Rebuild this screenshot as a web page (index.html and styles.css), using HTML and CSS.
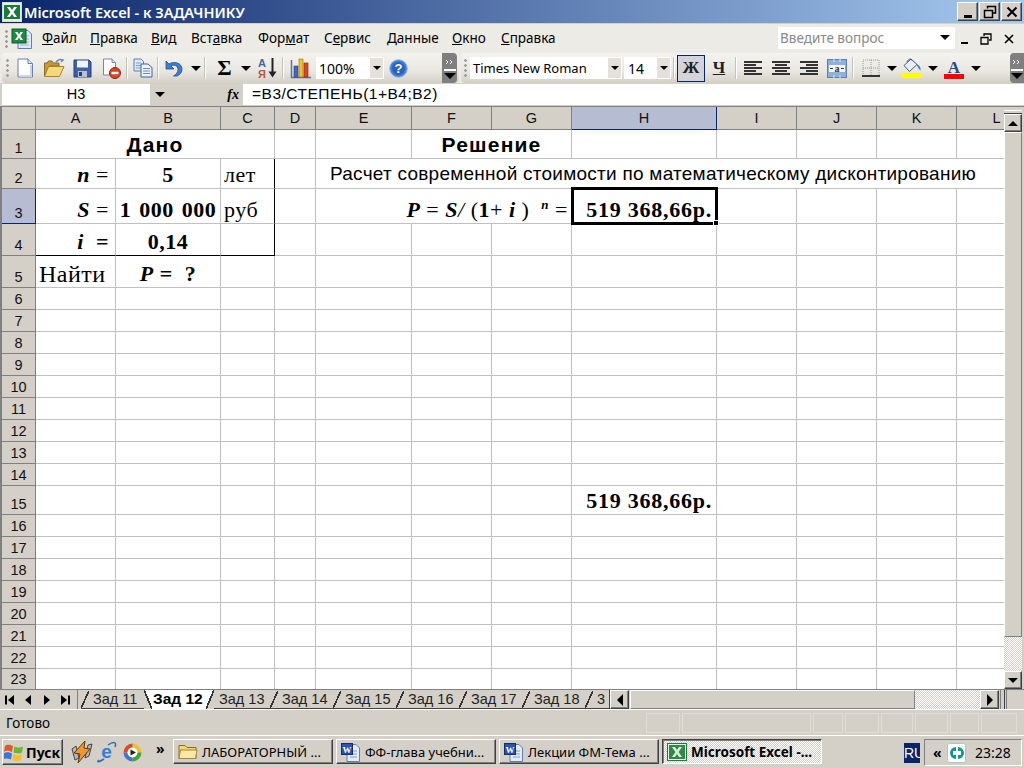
FILE: index.html
```html
<!DOCTYPE html>
<html lang="ru">
<head>
<meta charset="utf-8">
<title>Microsoft Excel</title>
<link rel="stylesheet" href="styles.css">
</head>
<body>
<div class="window">
  <header class="titlebar">
    <svg class="app-icon" width="20" height="20" viewBox="0 0 20 20"><rect x="0.5" y="0.5" width="19" height="19" fill="#e8f0e0" stroke="#cfe0c8"/><rect x="2" y="3" width="16" height="14" fill="#1c7a3c"/><path d="M5 5l3 0 2 3 2-3 3 0-3.500 5 3.500 5-3 0-2-3-2 3-3 0 3.500-5z" fill="#fff"/></svg>
    <span class="title-text">Microsoft Excel - к ЗАДАЧНИКУ</span>
    <div class="winbtns">
      <span class="winbtn"><i class="g-min"></i></span>
      <span class="winbtn"><svg width="14" height="14" viewBox="0 0 14 14"><path d="M4.500 3.500V1.500H12.500V8H10M1.500 5.500H9.500V12.500H1.500Z" fill="none" stroke="#000" stroke-width="1.500"/></svg></span>
      <span class="winbtn"><svg width="12" height="12" viewBox="0 0 12 12"><path d="M1.500 1.500L10.500 10.500M10.500 1.500L1.500 10.500" stroke="#000" stroke-width="2"/></svg></span>
    </div>
  </header>

  <nav class="menubar">
    <span class="grip"></span>
    <svg class="doc-icon" width="22" height="22" viewBox="0 0 22 22"><path d="M7 2.500H17L20.500 6V20.500H7Z" fill="#dfe8f6" stroke="#5f7fb5"/><path d="M9 8h9M9 11h9M9 14h9M9 17h9" stroke="#9db4d8"/><rect x="1" y="1" width="14" height="14" fill="#1e8a44" stroke="#0c5a26"/><path d="M4 4h2.500l1.500 2.500L9.500 4H12L9.300 8 12 12H9.500L8 9.500 6.500 12H4l2.700-4z" fill="#fff"/></svg>
    <div class="menus">
      <span class="m1"><u>Ф</u>айл</span>
      <span class="m2"><u>П</u>равка</span>
      <span class="m3"><u>В</u>ид</span>
      <span class="m4">Вст<u>а</u>вка</span>
      <span class="m5">Фор<u>м</u>ат</span>
      <span class="m6">С<u>е</u>рвис</span>
      <span class="m7"><u>Д</u>анные</span>
      <span class="m8"><u>О</u>кно</span>
      <span class="m9"><u>С</u>правка</span>
    </div>
    <div class="helpbox"><span>Введите вопрос</span><i class="arr"></i></div>
    <div class="doc-btns">
      <i class="g-min g-min-sm"></i>
      <svg width="12" height="12" viewBox="0 0 12 12"><path d="M4 3V1H11V7H9M1 4.500H8V11H1Z" fill="none" stroke="#000" stroke-width="1.300"/></svg>
      <svg width="10" height="10" viewBox="0 0 10 10"><path d="M1 1L9 9M9 1L1 9" stroke="#000" stroke-width="1.600"/></svg>
    </div>
  </nav>

  <div class="toolrow">
    <div class="toolbar tb-std">
      <span class="grip grip-tb"></span>
      <span class="tbtn"><svg width="18" height="20" viewBox="0 0 18 20"><path d="M2 1H12L16.500 5.500V19H2Z" fill="#fff" stroke="#6d7f9c"/><path d="M12 1V5.500H16.500" fill="#d9e4f4" stroke="#6d7f9c"/><path d="M15 7V18H4" fill="none" stroke="#c8d6ec" stroke-width="2"/></svg></span>
      <span class="tbtn"><svg width="22" height="20" viewBox="0 0 22 20"><path d="M1.500 18V5H4L5.500 3H9L10 5H16V8H6L1.500 18Z" fill="#c59a3c" stroke="#8a6a2a"/><path d="M1.500 18.500L5.500 8.500H21L16.500 18.500Z" fill="#f6d87a" stroke="#a8842f"/><path d="M13 4C15 1.500 17 1 20 2L18 4" fill="none" stroke="#6c87b5" stroke-width="1.500"/></svg></span>
      <span class="tbtn"><svg width="19" height="19" viewBox="0 0 19 19"><path d="M1 1H16L18 3V18H1Z" fill="#3f5fa8" stroke="#25407f"/><rect x="4" y="1.500" width="11" height="7" fill="#f0f3fa"/><rect x="5" y="12" width="9" height="6" fill="#b9c2d4"/><rect x="6" y="13" width="3" height="4" fill="#25407f"/></svg></span>
      <span class="tbtn"><svg width="19" height="21" viewBox="0 0 19 21"><path d="M1.500 1H10L13.500 4.500V17H1.500Z" fill="#fff" stroke="#7b8798"/><path d="M10 1V4.500H13.500" fill="#d9e4f4" stroke="#7b8798"/><circle cx="13" cy="15" r="5.500" fill="#d8452b" stroke="#8e2415"/><rect x="9.500" y="13.800" width="7" height="2.400" fill="#fff"/></svg></span>
      <i class="tsep"></i>
      <span class="tbtn"><svg width="20" height="20" viewBox="0 0 20 20"><path d="M1 1H8L10.500 3.500V13H1Z" fill="#dfe8f6" stroke="#5f7fb5"/><path d="M3 5h5M3 7.500h5M3 10h5" stroke="#7e9ccc"/><path d="M8 6H15L19 9.500V19H8Z" fill="#eef3fb" stroke="#3f61a5"/><path d="M10 10.500h7M10 13h7M10 15.500h7" stroke="#6d8ec8"/></svg></span>
      <i class="tsep"></i>
      <span class="tbtn"><svg width="19" height="19" viewBox="0 0 19 19"><path d="M2 2V10H10L7 7C10 5 14 7 14 10.500C14 13.500 12 15.500 9.500 17H13C16.500 15.500 18 13 18 10C18 4.500 11 1.500 5 5Z" fill="#3e7ecf" stroke="#21508f" stroke-width="0.800"/></svg></span>
      <span class="tarr"><i class="arr"></i></span>
      <i class="tsep tsep-a"></i>
      <span class="tbtn tbtn-s sigma">Σ</span>
      <span class="tarr tarr-s"><i class="arr"></i></span>
      <span class="tbtn"><svg width="20" height="22" viewBox="0 0 20 22"><text x="0" y="10" class="ic-az ic-a">А</text><text x="0" y="21" class="ic-az ic-r">Я</text><path d="M14.500 1V17" stroke="#222" stroke-width="2"/><path d="M10.500 14.500H18.500L14.500 20.500Z" fill="#222"/></svg></span>
      <i class="tsep"></i>
      <span class="tbtn tbtn-c"><svg width="22" height="22" viewBox="0 0 22 22"><path d="M1.500 3V20.500H21" fill="none" stroke="#62708a" stroke-width="1.500"/><rect x="4" y="9" width="4" height="11" fill="#3f66c8" stroke="#26407f" stroke-width="0.600"/><rect x="9" y="2" width="4" height="18" fill="#f0c030" stroke="#8e7018" stroke-width="0.600"/><rect x="14" y="6" width="4" height="14" fill="#d8452b" stroke="#8e2415" stroke-width="0.600"/></svg></span>
      <div class="combo combo-zoom"><span>100%</span><b><i class="arr arr-s"></i></b></div>
      <span class="tbtn"><svg width="19" height="19" viewBox="0 0 19 19"><circle cx="9.500" cy="9.500" r="8.800" fill="#3f7fd8" stroke="#8fb5ea"/><circle cx="9.500" cy="9.500" r="6.500" fill="#2a62c0"/><text x="9.500" y="14" class="ic-help">?</text></svg></span>
      <span class="flex1"></span>
      <span class="chevron"><svg width="14" height="26" viewBox="0 0 14 26"><path d="M3 5l2 2-2 2M7 5l2 2-2 2" fill="none" stroke="#fff"/><path d="M1 15H13" stroke="#fff" stroke-width="2"/><path d="M1 18H13L7 24Z" fill="#000"/></svg></span>
    </div>
    <div class="toolbar tb-fmt">
      <span class="grip grip-tb2"></span>
      <div class="combo combo-font"><span>Times New Roman</span><b><i class="arr arr-s"></i></b></div>
      <div class="combo combo-size"><span>14</span><b><i class="arr arr-s"></i></b></div>
      <i class="tsep tsep-f"></i>
      <span class="tbtn tbtn-on glyph">Ж</span>
      <span class="tbtn glyph glyph-u">Ч</span>
      <i class="tsep tsep-g"></i>
      <span class="tbtn"><i class="lines l-left"><i></i><i></i><i></i><i></i><i></i></i></span>
      <span class="tbtn"><i class="lines l-center"><i></i><i></i><i></i><i></i><i></i></i></span>
      <span class="tbtn"><i class="lines l-right"><i></i><i></i><i></i><i></i><i></i></i></span>
      <span class="tbtn"><svg width="20" height="19" viewBox="0 0 20 19"><rect x="0.500" y="0.500" width="19" height="18" fill="#8fb0d8" stroke="#5d7fb0"/><rect x="2" y="6" width="16" height="7" fill="#f2f5fa"/><path d="M3 9.500h3M17 9.500h-3" stroke="#333"/><path d="M7 3V0M13 3V0M7 16V19M13 16V19" stroke="#dfe8f6"/><text x="10" y="12.500" class="ic-merge">а</text></svg></span>
      <i class="tsep tsep-h"></i>
      <span class="tbtn tbtn-b"><svg width="18" height="18" viewBox="0 0 18 18"><path d="M1 1H17V17H1ZM9 1V17M1 9H17" fill="none" stroke="#9a9a9a" stroke-dasharray="1 1"/><path d="M0 17H18" stroke="#333" stroke-width="2"/></svg></span>
      <span class="tarr tarr-b"><i class="arr"></i></span>
      <span class="tbtn"><svg width="20" height="20" viewBox="0 0 20 20"><path d="M9 1L2 7.500L7.500 13.500L15 6.500Z" fill="#e8eef8" stroke="#405a88"/><path d="M5 4C6 1 9 0 10 2.500" fill="none" stroke="#405a88"/><path d="M15 6C18 8 19 10 18.500 12.500C17 11.500 16 9 15 8Z" fill="#3e7ecf"/><rect y="15" width="20" height="5" fill="#ffff00"/></svg></span>
      <span class="tarr tarr-f"><i class="arr"></i></span>
      <span class="tbtn"><svg width="20" height="21" viewBox="0 0 20 21"><text x="10" y="14.500" class="ic-a2">A</text><rect y="16" width="20" height="5" fill="#ff0000"/></svg></span>
      <span class="tarr tarr-l"><i class="arr"></i></span>
      <span class="flex1"></span>
      <span class="chevron chevron-end"><svg width="14" height="26" viewBox="0 0 14 26"><path d="M3 5l2 2-2 2M7 5l2 2-2 2" fill="none" stroke="#fff"/><path d="M1 15H13" stroke="#fff" stroke-width="2"/><path d="M1 18H13L7 24Z" fill="#000"/></svg></span>
    </div>
  </div>

  <div class="formulabar">
    <div class="namebox">H3</div>
    <span class="name-arrow"><i class="arr"></i></span>
    <span class="fx">fx</span>
    <div class="formula">=В3/СТЕПЕНЬ(1+В4;В2)</div>
  </div>

  <main class="sheet">
    <div class="gridwrap">
      <table class="grid">
        <colgroup><col class="c-h"><col class="c-a"><col class="c-b"><col class="c-c"><col class="c-d"><col class="c-e"><col class="c-x"><col class="c-x"><col class="c-hh"><col class="c-x"><col class="c-x"><col class="c-x"><col class="c-x"></colgroup>
        <thead>
          <tr class="head"><th></th><th>A</th><th>B</th><th>C</th><th>D</th><th>E</th><th>F</th><th>G</th><th class="sel">H</th><th>I</th><th>J</th><th>K</th><th>L</th></tr>
        </thead>
        <tbody>
          <tr class="r1"><th>1</th><td colspan="3" class="hd">Дано</td><td></td><td></td><td colspan="2" class="hd hd2">Решение</td><td></td><td></td><td></td><td></td><td></td></tr>
          <tr class="r2"><th>2</th><td class="ser right"><em>n</em> <span class="reg">=</span></td><td class="ser ctr">5</td><td class="ser lft reg bR">лет</td><td></td><td colspan="8" class="sans-txt">Расчет современной стоимости по математическому дисконтированию</td></tr>
          <tr class="r3"><th class="sel">3</th><td class="ser right"><em>S</em> <span class="reg">=</span></td><td class="ser ctr nowrap wide">1 000 000</td><td class="ser lft reg bR">руб</td><td></td><td colspan="3" class="ser eq"><em>P</em> <span class="reg">=</span> <em>S</em><span class="reg it">/</span> <span class="reg">(</span>1<span class="reg">+</span> <em>i</em> <span class="reg">)</span> &nbsp;<sup class="pow">n</sup> <span class="reg">=</span></td><td class="ser res active">519 368,66р.<span class="cursor"><i class="handle"></i></span></td><td></td><td></td><td></td><td></td></tr>
          <tr class="r4"><th>4</th><td class="ser right bB"><em>i</em> &nbsp;=</td><td class="ser ctr bB">0,14</td><td class="bB bR"></td><td></td><td></td><td></td><td></td><td></td><td></td><td></td><td></td><td></td></tr>
          <tr class="r5"><th>5</th><td class="ser lft reg big nowrap">Найти</td><td class="ser ctr"><em>P</em> = &nbsp;?</td><td></td><td></td><td></td><td></td><td></td><td></td><td></td><td></td><td></td><td></td></tr>
          <tr><th>6</th><td></td><td></td><td></td><td></td><td></td><td></td><td></td><td></td><td></td><td></td><td></td><td></td></tr>
          <tr><th>7</th><td></td><td></td><td></td><td></td><td></td><td></td><td></td><td></td><td></td><td></td><td></td><td></td></tr>
          <tr><th>8</th><td></td><td></td><td></td><td></td><td></td><td></td><td></td><td></td><td></td><td></td><td></td><td></td></tr>
          <tr><th>9</th><td></td><td></td><td></td><td></td><td></td><td></td><td></td><td></td><td></td><td></td><td></td><td></td></tr>
          <tr><th>10</th><td></td><td></td><td></td><td></td><td></td><td></td><td></td><td></td><td></td><td></td><td></td><td></td></tr>
          <tr><th>11</th><td></td><td></td><td></td><td></td><td></td><td></td><td></td><td></td><td></td><td></td><td></td><td></td></tr>
          <tr><th>12</th><td></td><td></td><td></td><td></td><td></td><td></td><td></td><td></td><td></td><td></td><td></td><td></td></tr>
          <tr><th>13</th><td></td><td></td><td></td><td></td><td></td><td></td><td></td><td></td><td></td><td></td><td></td><td></td></tr>
          <tr><th>14</th><td></td><td></td><td></td><td></td><td></td><td></td><td></td><td></td><td></td><td></td><td></td><td></td></tr>
          <tr class="r15"><th>15</th><td></td><td></td><td></td><td></td><td></td><td></td><td></td><td class="ser res">519 368,66р.</td><td></td><td></td><td></td><td></td></tr>
          <tr><th>16</th><td></td><td></td><td></td><td></td><td></td><td></td><td></td><td></td><td></td><td></td><td></td><td></td></tr>
          <tr><th>17</th><td></td><td></td><td></td><td></td><td></td><td></td><td></td><td></td><td></td><td></td><td></td><td></td></tr>
          <tr><th>18</th><td></td><td></td><td></td><td></td><td></td><td></td><td></td><td></td><td></td><td></td><td></td><td></td></tr>
          <tr><th>19</th><td></td><td></td><td></td><td></td><td></td><td></td><td></td><td></td><td></td><td></td><td></td><td></td></tr>
          <tr><th>20</th><td></td><td></td><td></td><td></td><td></td><td></td><td></td><td></td><td></td><td></td><td></td><td></td></tr>
          <tr><th>21</th><td></td><td></td><td></td><td></td><td></td><td></td><td></td><td></td><td></td><td></td><td></td><td></td></tr>
          <tr><th>22</th><td></td><td></td><td></td><td></td><td></td><td></td><td></td><td></td><td></td><td></td><td></td><td></td></tr>
          <tr class="r23"><th>23</th><td></td><td></td><td></td><td></td><td></td><td></td><td></td><td></td><td></td><td></td><td></td><td></td></tr>
        </tbody>
      </table>
    </div>
    <aside class="vscroll">
      <i class="split-h"></i>
      <span class="sbtn sbtn-v"><i class="tri tri-up"></i></span>
      <span class="vthumb"></span>
      <span class="dither flex1"></span>
      <span class="sbtn sbtn-v"><i class="tri tri-down"></i></span>
    </aside>
  </main>

  <div class="tabsrow">
    <div class="tabnav">
      <svg width="12" height="12" viewBox="0 0 12 12"><path d="M2 1.500V10.500" stroke="#000" stroke-width="2"/><path d="M10 1L4 6L10 11Z"/></svg>
      <svg width="12" height="12" viewBox="0 0 12 12"><path d="M9 1L3 6L9 11Z"/></svg>
      <svg width="12" height="12" viewBox="0 0 12 12"><path d="M3 1L9 6L3 11Z"/></svg>
      <svg width="12" height="12" viewBox="0 0 12 12"><path d="M10 1.500V10.500" stroke="#000" stroke-width="2"/><path d="M2 1L8 6L2 11Z"/></svg>
    </div>
    <div class="tabs">
      <span class="tab">Зад 11</span>
      <span class="tab tab-on">Зад 12</span>
      <span class="tab">Зад 13</span>
      <span class="tab">Зад 14</span>
      <span class="tab">Зад 15</span>
      <span class="tab">Зад 16</span>
      <span class="tab">Зад 17</span>
      <span class="tab">Зад 18</span>
      <span class="tab tab-last">3</span>
    </div>
    <div class="hscroll">
      <span class="sbtn sbtn-h"><i class="tri tri-left"></i></span>
      <span class="hthumb"></span>
      <span class="dither flex1"></span>
      <span class="sbtn sbtn-h"><i class="tri tri-right"></i></span>
      <i class="split-v"></i>
      <span class="corner"></span>
    </div>
  </div>

  <div class="statusbar">
    <span class="status-text">Готово</span>
    <div class="panels"><i class="p1"></i><i class="p2"></i><i class="p3"></i><i class="p4"></i><i class="p5"></i><i class="p6"></i><i class="p7"></i><i class="p8"></i></div>
  </div>

  <footer class="taskbar">
    <div class="start">
      <svg width="20" height="20" viewBox="0 0 20 20"><path d="M1 4C4 2 6 3 9 4L8 10C5 9 3 8 0 10Z" fill="#e2572a"/><path d="M10.500 4.500C13 6 16 6 19 4.500L18 10.500C15 12 13 11.500 9.500 10.500Z" fill="#6cb52e"/><path d="M0 11.500C3 9.500 5 10.500 8 11.500L7 17.500C4 16.500 2 16 -1 17.500Z" fill="#3d74d8"/><path d="M9.500 12C12 13.500 15 13.500 18 12L17 18C14 19.500 11 19 8.500 18Z" fill="#f3c02c"/></svg>
      <span>Пуск</span>
    </div>
    <div class="quick">
      <svg class="q1" width="22" height="24" viewBox="0 0 22 24"><path d="M5 6L1 9L4 20L8 18ZM17 5L21 4L18 16L14 18Z" fill="#b8b8b8" stroke="#444"/><path d="M14 1L3 13L9 14L7 23L19 9L13 8Z" fill="#f0962a" stroke="#5a3a10"/></svg>
      <svg class="q2" width="21" height="22" viewBox="0 0 21 22"><text x="10.500" y="17" class="ic-e">e</text><path d="M3 19C0 22 3 21 8 18M12 4C18 0 21 1 19 6" fill="none" stroke="#2c6fb9" stroke-width="1.500"/></svg>
      <svg class="q3" width="19" height="19" viewBox="0 0 19 19"><path d="M9.500 .5A9 9 0 0 1 18.500 9.500H13A3.500 3.500 0 0 0 9.500 6Z" fill="#e9c22c"/><path d="M18.500 9.500A9 9 0 0 1 9.500 18.500V13A3.500 3.500 0 0 0 13 9.500Z" fill="#43a339"/><path d="M9.500 18.500A9 9 0 0 1 .5 9.500H6A3.500 3.500 0 0 0 9.500 13Z" fill="#3f77d0"/><path d="M.5 9.500A9 9 0 0 1 9.500 .5V6A3.500 3.500 0 0 0 6 9.500Z" fill="#d9492a"/><circle cx="9.500" cy="9.500" r="5" fill="#fff"/><path d="M7.500 6.500L13 9.500L7.500 12.500Z" fill="#222"/></svg>
      <span class="more">»</span>
    </div>
    <div class="tasks">
      <span class="task"><svg width="20" height="17" viewBox="0 0 20 17"><path d="M1 15.500V2.500H7L9 4.500H18V15.500Z" fill="#f3d477" stroke="#8a6a20"/><path d="M1 15.500L2.500 7H19L17.500 15.500Z" fill="#fbe9a8" stroke="#a8842f"/></svg><em>ЛАБОРАТОРНЫЙ ...</em></span>
      <span class="task"><svg width="20" height="20" viewBox="0 0 20 20"><path d="M6 2.500H15L18.500 6V19.500H6Z" fill="#e4ecf8" stroke="#5f7fb5"/><path d="M9 9h7M9 12h7M9 15h7" stroke="#7e9ccc"/><rect x="0.500" y="1.500" width="11" height="11" fill="#2a52b0" stroke="#152d6d"/><text x="6" y="10.500" class="ic-w">W</text></svg><em>ФФ-глава учебни...</em></span>
      <span class="task"><svg width="20" height="20" viewBox="0 0 20 20"><path d="M6 2.500H15L18.500 6V19.500H6Z" fill="#e4ecf8" stroke="#5f7fb5"/><path d="M9 9h7M9 12h7M9 15h7" stroke="#7e9ccc"/><rect x="0.500" y="1.500" width="11" height="11" fill="#2a52b0" stroke="#152d6d"/><text x="6" y="10.500" class="ic-w">W</text></svg><em>Лекции ФМ-Тема ...</em></span>
      <span class="task task-on"><svg width="20" height="18" viewBox="0 0 20 18"><rect x="0.500" y="0.500" width="19" height="17" fill="#e8f0e0" stroke="#1c7a3c"/><rect x="2" y="2" width="16" height="14" fill="#2c8a4a"/><path d="M5 4h3l2 3 2-3h3l-3.500 5L15 14h-3l-2-3-2 3H5l3.500-5z" fill="#dff0d8"/></svg><em>Microsoft Excel -...</em></span>
    </div>
    <div class="lang">RU</div>
    <div class="tray">
      <span class="tray-more">«</span>
      <svg width="19" height="20" viewBox="0 0 19 20"><rect x="0.500" y="0.500" width="18" height="19" rx="2" fill="#fff" stroke="#a8c8c0"/><path d="M9 4A6 6 0 1 0 9 16ZM11 4V16A6 6 0 0 0 11 4Z" fill="#0e9a8e"/><rect x="6" y="8" width="3" height="4" fill="#fff"/><rect x="11" y="8" width="3" height="4" fill="#fff"/></svg>
      <span class="clock">23:28</span>
    </div>
  </footer>
</div>
</body>
</html>
```
FILE: styles.css
```css
* { box-sizing: border-box; }
html, body { margin: 0; padding: 0; background: #d4d0c8; }
.window { width: 1024px; height: 768px; overflow: hidden; display: flex; flex-direction: column; font-family: "Noto Sans", "Liberation Sans", sans-serif; color: #000; }
.flex1 { flex: 1; }
i { display: block; font-style: normal; }

/* title */
.titlebar { height: 23px; flex: none; display: flex; align-items: center; padding: 0 2px 0 2px; background: linear-gradient(to right, #0a246a, #a6caf0); }
.app-icon { flex: none; margin-right: 2px; }
.title-text { color: #fff; font-size: 14.500px; font-weight: 600; flex: 1; white-space: nowrap; }
.winbtns { display: flex; gap: 1px; }
.winbtn { width: 21px; height: 19px; display: flex; align-items: center; justify-content: center; background: #d4d0c8; border: 1px solid; border-color: #fff #404040 #404040 #fff; box-shadow: inset -1px -1px 0 #808080; }
.g-min { width: 8px; height: 3px; background: #000; margin-top: 9px; }
.g-min-sm { height: 2px; width: 8px; margin-top: 8px; }

/* menu */
.menubar { height: 30px; flex: none; display: flex; align-items: center; background: #ecebe6; border-top: 1px solid #d4d0c8; padding-left: 5px; }
.grip { width: 3px; height: 18px; flex: none; background: radial-gradient(circle at 1.500px 1.500px, #a09c90 1.200px, transparent 1.500px) 0 0 / 3px 5px; }
.doc-icon { margin-left: 3px; flex: none; }
.menus { display: flex; font-size: 13.500px; margin: -2px 0 0 9px; width: 736px; white-space: nowrap; }
.menus span { flex: none; }
.m1 { width: 48px; } .m2 { width: 61px; } .m3 { width: 40px; } .m4 { width: 67px; } .m5 { width: 66px; } .m6 { width: 63px; } .m7 { width: 65px; } .m8 { width: 49px; }
.helpbox { width: 177px; height: 22px; background: #fff; display: flex; align-items: center; justify-content: space-between; padding: 0 5px 0 2px; font-size: 13.500px; color: #8a8a8a; flex: none; margin-top: -2px; }
.doc-btns { display: flex; align-items: center; gap: 12px; margin-left: 6px; width: 60px; }
.doc-btns .g-min-sm { width: 7px; }
.arr { width: 0; height: 0; border-left: 5px solid transparent; border-right: 5px solid transparent; border-top: 5px solid #000; }
.arr-s { border-left-width: 4px; border-right-width: 4px; border-top-width: 4px; }

/* toolbars */
.toolrow { height: 30px; flex: none; display: flex; background: #ecebe6; padding-left: 2px; }
.toolbar { height: 30px; display: flex; align-items: center; background: linear-gradient(to bottom, #f4f3ef, #e9e7e1 60%, #d3d0c6); border-radius: 4px 0 0 4px; }
.tb-std { width: 457px; padding-left: 4px; border-radius: 4px; }
.tb-fmt { width: 563px; padding-left: 3px; margin-left: 2px; }
.grip-tb { margin-right: 1px; }
.grip-tb2 { margin-right: 3px; }
.tbtn { flex: none; width: 29px; height: 28px; display: flex; align-items: center; justify-content: center; }
.tb-fmt .tbtn { width: 28px; }
.tbtn-s { margin-left: 2px; }
.tbtn-c { margin-left: 3px; margin-right: 1px; width: 28px; }
.tarr { flex: none; width: 15px; display: flex; justify-content: center; }
.tarr-s { width: 13px; margin-right: 1px; }
.tarr-b { width: 13px; }
.tarr-f { width: 14px; }
.tarr-l { width: 15px; }
.tsep { flex: none; width: 2px; height: 22px; background: linear-gradient(to right, #c5c2b8 50%, #fff 50%); }
.tsep-a { margin-left: 1px; margin-right: 2px; }
.tsep-f { margin: 0 2px; }
.tsep-g { margin: 0 2px; }
.tsep-h { margin: 0 3px 0 1px; }
.sigma { font-family: "Liberation Serif", serif; font-weight: 700; font-size: 22px; }
.combo { flex: none; height: 22px; background: #fff; display: flex; align-items: center; justify-content: space-between; font-size: 14px; padding-left: 3px; }
.combo span { white-space: nowrap; }
.combo b { width: 13px; height: 20px; background: #e3e1da; display: flex; align-items: center; justify-content: center; margin-right: 1px; }
.combo-zoom { width: 68px; }
.combo-font { width: 152px; margin-right: 2px; font-size: 13px; }
.combo-size { width: 47px; padding-left: 4px; }
.tb-fmt .tbtn-on { height: 27px; background: #d2d4da; border: 1px solid #0a246a; }
.glyph { font-family: "Liberation Serif", serif; font-weight: 700; font-size: 17px; color: #222; }
.glyph-u { text-decoration: underline; }
.lines { display: flex; flex-direction: column; gap: 1px; width: 18px; }
.lines i { height: 2px; width: 18px; background: #333; }
.lines i:nth-child(even) { width: 12px; }
.l-center { align-items: center; }
.l-right { align-items: flex-end; }
.chevron { flex: none; width: 15px; height: 30px; display: flex; align-items: center; justify-content: center; background: #7f7f7f; border-radius: 0 4px 4px 0; margin-right: 2px; }
.chevron-end { margin-right: 0; width: 14px; border-radius: 4px 0 0 4px; }
.ic-az { font-family: "Liberation Sans", sans-serif; font-weight: 700; font-size: 11px; }
.ic-a { fill: #3f66a8; }
.ic-r { fill: #b5564a; }
.ic-help { font-family: "Liberation Sans", sans-serif; font-weight: 700; font-size: 13px; fill: #fff; text-anchor: middle; }
.ic-merge { font-family: "Liberation Serif", serif; font-weight: 700; font-size: 10px; text-anchor: middle; fill: #333; }
.ic-a2 { font-family: "Liberation Serif", serif; font-weight: 700; font-size: 17px; text-anchor: middle; fill: #24478f; }
.ic-w { font-family: "Liberation Serif", serif; font-weight: 700; font-size: 9px; text-anchor: middle; fill: #fff; }
.ic-e { font-family: "Liberation Sans", sans-serif; font-weight: 700; font-size: 19px; text-anchor: middle; fill: #2f80d8; }

/* formula bar */
.formulabar { height: 23px; flex: none; display: flex; background: #d4d0c8; padding: 1px 0 1px 2px; }
.namebox { width: 148px; background: #fff; text-align: center; font: 14.500px/21px "Liberation Sans", sans-serif; }
.name-arrow { width: 20px; display: flex; align-items: center; justify-content: center; }
.fx { width: 73px; text-align: right; padding-right: 4px; font: italic 700 14px/21px "Liberation Serif", serif; }
.formula { flex: 1; background: #fff; padding-left: 9px; font: 15.500px/20px "Liberation Sans", sans-serif; letter-spacing: 0.500px; }

/* sheet */
.sheet { height: 583px; flex: none; display: flex; border-top: 1px solid #808080; }
.gridwrap { width: 1004px; flex: none; overflow: hidden; border-left: 2px solid #808080; background: #fff; }
.grid { table-layout: fixed; width: 1035px; border-collapse: separate; border-spacing: 0; }
.c-h { width: 34px; } .c-a { width: 80px; } .c-b { width: 105px; } .c-c { width: 54px; } .c-d { width: 41px; } .c-e { width: 96px; } .c-x { width: 80px; } .c-hh { width: 145px; }
.grid th { background: #d4d0c8; font: 400 14.500px/20px "Liberation Sans", sans-serif; color: #111; text-align: center; vertical-align: bottom; border-right: 1px solid #808080; border-bottom: 1px solid #808080; padding: 0; height: 22px; }
.grid td { height: 22px; padding: 0; border-right: 1px solid #c0c0c0; border-bottom: 1px solid #c0c0c0; vertical-align: bottom; overflow: hidden; position: relative; }
.head th { height: 23px; vertical-align: middle; }
.grid th.sel { background: #b6bdd2; border-right-color: #0a246a; border-bottom-color: #0a246a; }
.r1 th, .r1 td { height: 29px; }
.r2 th, .r2 td { height: 30px; }
.r3 th, .r3 td { height: 35px; }
.r4 th, .r4 td { height: 32px; }
.r5 th, .r5 td { height: 32px; }
.r15 th, .r15 td { height: 29px; }
.r23 th, .r23 td { height: 21px; border-bottom-color: transparent; }
.r23 th { border-bottom-color: #d4d0c8; }
.grid td.bB { border-bottom-color: #000; }
.grid td.bR { border-right-color: #000; }
.hd { font: 700 21px/26px "Liberation Sans", sans-serif; text-align: center; letter-spacing: 1.200px; }
.sans-txt { font: 19px/29px "Liberation Sans", sans-serif; padding-left: 14px !important; white-space: nowrap; letter-spacing: 0.250px; }
.ser { font: 700 22px/26px "Liberation Serif", serif; white-space: nowrap; letter-spacing: 0.500px; }
.ser em { font-style: italic; }
.reg { font-weight: 400; }
.it { font-style: italic; }
.wide { word-spacing: 2px; }
.right { text-align: right; padding-right: 6px !important; }
.ctr { text-align: center; }
.lft { padding-left: 3px !important; }
.big { font-size: 24px; }
.eq { text-align: right; padding-right: 3px !important; overflow: visible; }
.pow { font-size: 13px; font-style: italic; line-height: 0; vertical-align: 8px; }
.res { text-align: right; padding-right: 4px !important; letter-spacing: 0.750px; }
.grid td.active { overflow: visible; z-index: 2; }
.cursor { position: absolute; left: -1px; top: -2px; right: -2px; bottom: -2px; border: 3px solid #000; }
.handle { position: absolute; right: -4px; bottom: -4px; width: 6px; height: 6px; background: #000; border: 1px solid #fff; }

/* scrollbars */
.vscroll { width: 18px; flex: none; display: flex; flex-direction: column; }
.split-h { height: 7px; flex: none; border-bottom: 1px solid #404040; border-top: 3px solid #d4d0c8; box-shadow: inset 0 1px 0 #fff; }
.sbtn { flex: none; display: flex; align-items: center; justify-content: center; background: #d4d0c8; border: 1px solid; border-color: #fff #404040 #404040 #fff; box-shadow: inset -1px -1px 0 #808080; }
.sbtn-v { height: 18px; width: 18px; }
.vthumb { height: 505px; flex: none; background: #d4d0c8; border: 1px solid; border-color: #fff #808080 #808080 #fff; }
.dither { background: repeating-conic-gradient(#fff 0 25%, #d4d0c8 0 50%) 0 0 / 2px 2px; }
.tri { width: 0; height: 0; }
.tri-up { border-left: 5px solid transparent; border-right: 5px solid transparent; border-bottom: 5px solid #000; }
.tri-down { border-left: 5px solid transparent; border-right: 5px solid transparent; border-top: 5px solid #000; }
.tri-left { border-top: 6px solid transparent; border-bottom: 6px solid transparent; border-right: 6px solid #000; }
.tri-right { border-top: 6px solid transparent; border-bottom: 6px solid transparent; border-left: 6px solid #000; }

/* tabs */
.tabsrow { height: 20px; flex: none; display: flex; background: #d4d0c8; border-top: 1px solid #808080; }
.tabnav { width: 78px; flex: none; display: flex; align-items: center; justify-content: space-between; padding: 0 6px 0 4px; border-right: 1px solid #808080; }
.tabs { width: 530px; margin-left: 1px; flex: none; display: flex; overflow: hidden; font: 14.500px/18px "Liberation Sans", sans-serif; padding-left: 2px; }
.tab { position: relative; flex: none; width: 63px; height: 19px; padding-left: 12px; white-space: nowrap; color: #222; border-bottom: 1px solid #404040; }
.tab::before { content: ""; position: absolute; left: 0; top: 1px; width: 8px; height: 17px; background: linear-gradient(to bottom right, transparent 44%, #333 44%, #333 56%, transparent 56%); }
.tab-on { width: 70px; margin-right: -7px; z-index: 1; padding-left: 9px; border-bottom: 0; font-size: 15.500px; font-weight: 700; color: #000; background: linear-gradient(to top right, #d4d0c8 44%, #333 44%, #333 56%, #fff 56%) left top / 8px 100% no-repeat, linear-gradient(to bottom right, #fff 44%, #333 44%, #333 56%, #d4d0c8 56%) right top / 8px 100% no-repeat, linear-gradient(#fff, #fff) center / calc(100% - 16px) 100% no-repeat; }
.tab-on::before, .tab-on + .tab::before { display: none; }
.tab-last { width: 40px; }
.hscroll { width: 415px; flex: none; display: flex; border-left: 1px solid #404040; }
.sbtn-h { width: 19px; height: 19px; }
.hthumb { width: 285px; flex: none; margin-left: 1px; background: #d4d0c8; border: 1px solid; border-color: #fff #808080 #808080 #fff; }
.split-v { width: 5px; height: 19px; margin: 0 1px; flex: none; border-left: 1px solid #808080; border-right: 1px solid #404040; }
.corner { width: 18px; height: 19px; flex: none; border-left: 1px solid #808080; }

/* status */
.statusbar { height: 27px; flex: none; display: flex; align-items: center; background: #d4d0c8; border-top: 1px solid #fff; border-bottom: 1px solid #fff; padding-left: 6px; }
.status-text { font-size: 13.500px; width: 640px; flex: none; }
.panels { display: flex; gap: 2px; height: 20px; }
.panels i { border: 1px solid #e0ddd6; height: 20px; }
.p1 { width: 34px; } .p2 { width: 129px; } .p3 { width: 30px; } .p4 { width: 34px; } .p5 { width: 32px; } .p6 { width: 33px; } .p7 { width: 29px; } .p8 { width: 36px; }

/* taskbar */
.taskbar { flex: 1; display: flex; align-items: flex-start; background: #d4d0c8; padding: 3px 0 0 2px; }
.start { width: 61px; height: 26px; flex: none; display: flex; align-items: center; gap: 2px; padding-left: 1px; background: #d4d0c8; border: 1px solid; border-color: #fff #404040 #404040 #fff; box-shadow: inset -1px -1px 0 #808080; font-weight: 700; font-size: 14px; }
.quick { width: 110px; flex: none; display: flex; align-items: center; height: 26px; }
.q1 { margin-left: 8px; flex: none; }
.q2 { margin-left: 3px; flex: none; }
.q3 { margin-left: 6px; flex: none; }
.more { margin-left: 14px; font-size: 14px; font-weight: 700; margin-top: -8px; }
.tasks { width: 648px; flex: none; display: flex; gap: 3px; }
.task { width: 160px; height: 25px; flex: none; display: flex; align-items: center; gap: 4px; padding-left: 4px; background: #d4d0c8; border: 1px solid; border-color: #fff #404040 #404040 #fff; box-shadow: inset -1px -1px 0 #808080; font-size: 13px; overflow: hidden; white-space: nowrap; }
.task em { font-style: normal; }
.task-on { border-color: #404040 #fff #fff #404040; box-shadow: inset 1px 1px 0 #808080; font-weight: 700; font-size: 13.500px; background: repeating-conic-gradient(#fff 0 25%, #d4d0c8 0 50%) 0 0 / 2px 2px; }
.lang { width: 16px; height: 20px; flex: none; margin: 4px 0 0 83px; background: #0a246a; color: #fff; font: 14px/20px "Liberation Sans", sans-serif; overflow: hidden; white-space: nowrap; }
.tray { width: 98px; height: 27px; flex: none; margin-left: 4px; display: flex; align-items: center; border: 1px solid; border-color: #808080 #fff #fff #808080; padding-left: 8px; font-size: 14px; }
.tray-more { font-weight: 700; width: 14px; }
.clock { margin-left: 9px; }
```
